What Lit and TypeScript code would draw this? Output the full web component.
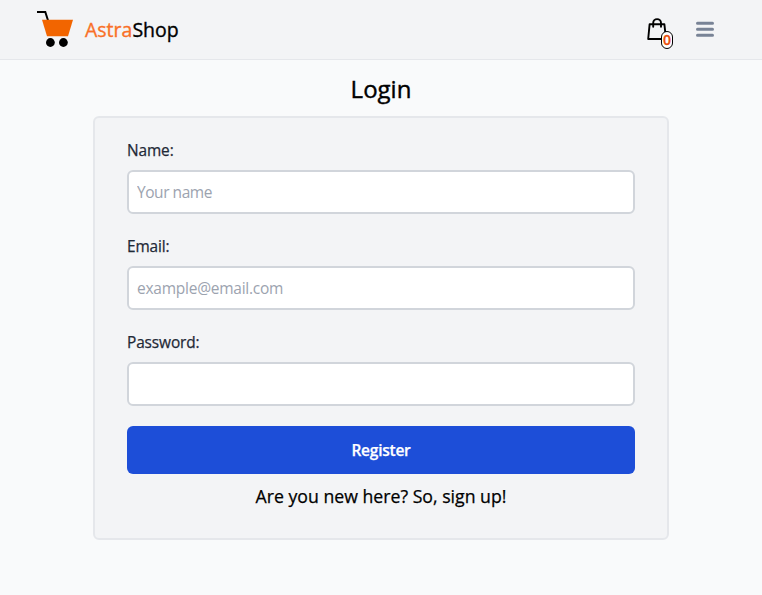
import { LitElement, html, css } from "lit";
import { customElement } from "lit/decorators.js";

@customElement("app-root")
export class AppRoot extends LitElement {
  static styles = css`
    :host {
      display: flex;
      flex-direction: column;
      min-height: 100vh;
      background: #f9fafb;
      color: #000;
      font-family: "Segoe UI", "Open Sans", "Noto Sans", sans-serif;
    }
    * { box-sizing: border-box; }
    header {
      display: flex;
      align-items: center;
      justify-content: space-between;
      height: 60px;
      padding: 0 48px 0 37px;
      background: #f3f4f6;
      border-bottom: 1px solid #e5e7eb;
    }
    svg { display: block; }
    .brand { display: flex; align-items: center; gap: 12px; }
    .name {
      font-size: 19.5px;
      line-height: 28px;
      font-weight: 500;
      -webkit-text-stroke: 0.35px currentColor;
      white-space: nowrap;
    }
    .accent { color: #f97027; }
    .actions { display: flex; align-items: center; gap: 23px; }
    .bag { position: relative; width: 26px; height: 31px; }
    .count {
      position: absolute;
      right: 0;
      bottom: -4px;
      width: 12px;
      height: 18px;
      border: 1px solid #000;
      border-radius: 6px;
      background: #fff;
      color: #ea4f0c;
      font-size: 14px;
      line-height: 16px;
      font-weight: 600;
      -webkit-text-stroke: 0.3px currentColor;
      display: flex;
      justify-content: center;
    }
    main { display: flex; flex-direction: column; align-items: center; padding-top: 11px; }
    h1 {
      margin: 0 0 9px;
      font-size: 24px;
      line-height: 36px;
      font-weight: 500;
      -webkit-text-stroke: 0.4px currentColor;
    }
    form {
      display: flex;
      flex-direction: column;
      width: 576px;
      height: 424px;
      padding: 20px 32px 0;
      border: 2px solid #e5e7eb;
      border-radius: 6px;
      background: #f3f4f6;
    }
    label {
      font-size: 15.4px;
      line-height: 24px;
      padding-top: 1px;
      margin-bottom: 7px;
      font-weight: 500;
      letter-spacing: -0.1px;
      color: #1f2937;
      -webkit-text-stroke: 0.25px currentColor;
    }
    input {
      display: block;
      width: 100%;
      height: 44px;
      margin: 0 0 20px;
      padding: 0 8px;
      border: 2px solid #d1d5db;
      border-radius: 6px;
      background: #fff;
      font: 400 15.5px/24px "Segoe UI", "Open Sans", "Noto Sans", sans-serif;
      letter-spacing: -0.25px;
      outline: none;
    }
    input::placeholder { color: #9ca3af; opacity: 1; }
    #name { letter-spacing: -0.45px; }
    button {
      height: 48px;
      border: 0;
      border-radius: 6px;
      background: #1d4ed8;
      color: #fff;
      font: 600 15.5px/24px "Segoe UI", "Open Sans", "Noto Sans", sans-serif;
      letter-spacing: -0.25px;
      -webkit-text-stroke: 0.25px currentColor;
    }
    .signup {
      margin: 8px 0 0;
      text-align: center;
      font-size: 17.7px;
      line-height: 28px;
      font-weight: 500;
      white-space: nowrap;
      -webkit-text-stroke: 0.25px currentColor;
    }
  `;

  render() {
    return html`
      <header>
        <div class="brand">
          <svg width="36" height="38" viewBox="0 0 36 38">
            <path d="M0 1H8.3L11.2 10" fill="none" stroke="#000" stroke-width="2" />
            <path d="M5 8.8H36L31 25.3H10Z" fill="#f26500" />
            <circle cx="13.4" cy="31.5" r="4.4" />
            <circle cx="26.4" cy="31.5" r="4.4" />
          </svg>
          <div class="name"><span class="accent">Astra</span>Shop</div>
        </div>
        <div class="actions">
          <div class="bag">
            <svg width="26" height="31" viewBox="0 0 26 31">
              <g fill="none" stroke="#000" stroke-width="1.9" stroke-linejoin="round" stroke-linecap="round">
                <path d="M2.6 10.3H17.4L19 25H1.2Z" />
                <path d="M6.2 12.8V9a3.8 3.8 0 0 1 7.8 0v3.8" />
              </g>
            </svg>
            <span class="count">0</span>
          </div>
          <svg width="18" height="18" viewBox="0 0 18 18">
            <path d="M1.5 2.2H16.5M1.5 8.2H16.5M1.5 14.2H16.5" stroke="#788396" stroke-width="3" stroke-linecap="round" />
          </svg>
        </div>
      </header>
      <main>
        <h1>Login</h1>
        <form @submit=${(e: Event) => e.preventDefault()}>
          <label for="name">Name:</label>
          <input id="name" type="text" placeholder="Your name" />
          <label for="email">Email:</label>
          <input id="email" type="email" placeholder="example@email.com" />
          <label for="password">Password:</label>
          <input id="password" type="password" />
          <button type="submit">Register</button>
          <p class="signup">Are you new here? So, sign up!</p>
        </form>
      </main>
    `;
  }
}
